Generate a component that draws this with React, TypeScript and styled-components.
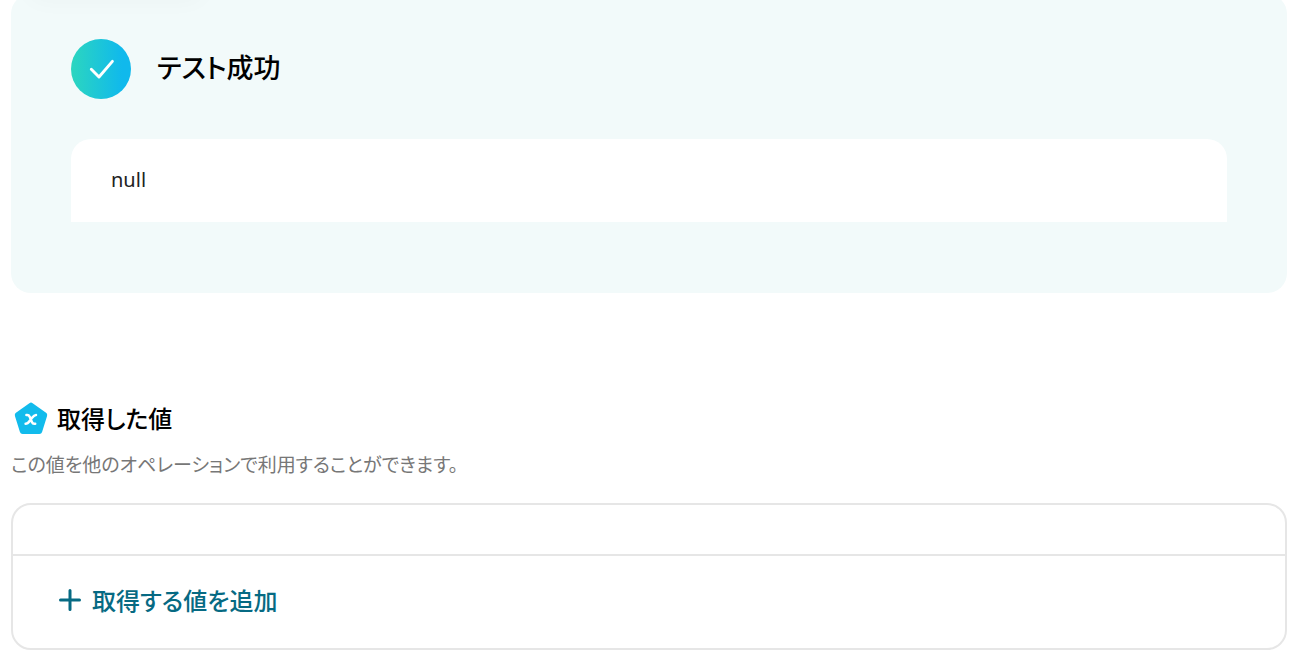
import React from "react";
import styled, { createGlobalStyle } from "styled-components";

const GlobalStyle = createGlobalStyle`
  * { box-sizing: border-box; }
  body {
    margin: 0;
    background: #fff;
    color: #000;
    font-family: "Noto Sans", "Noto Sans CJK JP", sans-serif;
    font-feature-settings: "palt";
    overflow-x: hidden;
  }
  h2, h3, p, output { margin: 0; }
`;

const Page = styled.main`
  position: relative;
  display: flow-root;
  padding: 0 29px 8px 11px;
  overflow: hidden;
`;

const FloatingShadow = styled.div`
  position: absolute;
  top: -40px;
  left: 28px;
  width: 176px;
  height: 32px;
  border-radius: 16px;
  box-shadow: 0 8px 24px rgba(0, 0, 0, 0.03);
`;

const ResultPanel = styled.section`
  margin-top: -6px;
  padding: 45px 60px 71px;
  border-radius: 20px;
  background: #f2fafa;
`;

const ResultHeader = styled.header`
  display: flex;
  align-items: center;
  gap: 26px;
  margin-bottom: 40px;
`;

const ResultTitle = styled.h2`
  padding-bottom: 4px;
  font-family: "Noto Sans CJK JP", sans-serif;
  font-size: 27px;
  line-height: 40px;
  font-weight: 500;
`;

const ResultBody = styled.output`
  display: block;
  padding: 23px 40px 25px;
  border-radius: 20px 20px 0 0;
  background: #fff;
  color: #222;
  font-size: 20px;
  line-height: 35px;
`;

const ValuesSection = styled.section`
  margin-top: 106px;
`;

const ValuesHeader = styled.header`
  display: flex;
  align-items: center;
  gap: 6px;
`;

const ValuesTitle = styled.h3`
  padding-bottom: 2px;
  font-family: "Noto Sans CJK JP", sans-serif;
  font-size: 24px;
  line-height: 38px;
  font-weight: 500;
`;

const Description = styled.p`
  margin: 11px 0 25px;
  color: #777;
  font-family: "Noto Sans CJK JP", sans-serif;
  font-size: 19px;
  line-height: 28px;
`;

const ValuesCard = styled.div`
  border: 2px solid #e6e6e6;
  border-radius: 20px;
`;

const ValuesList = styled.div`
  height: 51px;
  border-bottom: 2px solid #e6e6e6;
`;

const AddRow = styled.div`
  padding: 24px 44px 28px;
`;

const AddButton = styled.button`
  display: flex;
  align-items: center;
  gap: 9px;
  padding: 0;
  border: 0;
  background: none;
  color: #066a83;
  font-family: "Noto Sans CJK JP", sans-serif;
  font-feature-settings: inherit;
  font-size: 24px;
  line-height: 40px;
  font-weight: 500;
  cursor: pointer;
`;

const Icon = styled.svg`
  display: block;
  flex: none;
`;

function SuccessIcon() {
  return (
    <Icon width="60" height="60" viewBox="0 0 60 60" aria-hidden="true">
      <defs>
        <linearGradient id="success" x1="0" y1="0" x2="1" y2="0">
          <stop offset="0" stopColor="#2cd6bf" />
          <stop offset="0.85" stopColor="#10b9ec" />
          <stop offset="1" stopColor="#10b9ec" />
        </linearGradient>
      </defs>
      <circle cx="30" cy="30" r="30" fill="url(#success)" />
      <path
        d="M20.3 30.2L28 38L41.4 22.4"
        fill="none"
        stroke="#fff"
        strokeWidth="2.9"
        strokeLinecap="round"
        strokeLinejoin="round"
      />
    </Icon>
  );
}

function ValueIcon() {
  return (
    <Icon width="40" height="40" viewBox="0 0 40 40" aria-hidden="true">
      <path
        d="M20 6.4L33.4 16.1L28.4 32.2H11.6L6.6 16.1Z"
        fill="#12bbec"
        stroke="#12bbec"
        strokeWidth="5.6"
        strokeLinejoin="round"
      />
      <path
        d="M15.4 16H16.2C17.6 16 18.2 16.6 18.7 17.7L20.9 23C21.4 24.2 22 24.8 23.2 24.8H24.2M25 16C22.6 16 21.6 18.2 19.8 20.4C18 22.8 17 24.8 14.6 24.8"
        fill="none"
        stroke="#fff"
        strokeWidth="2.5"
        strokeLinecap="round"
      />
    </Icon>
  );
}

function PlusIcon() {
  return (
    <Icon width="26" height="26" viewBox="0 0 26 26" aria-hidden="true">
      <path d="M13 3.5V22.5M3.5 13H22.5" stroke="currentColor" strokeWidth="3" strokeLinecap="round" />
    </Icon>
  );
}

export default function App() {
  return (
    <>
      <GlobalStyle />
      <Page>
        <ResultPanel>
          <ResultHeader>
            <SuccessIcon />
            <ResultTitle>テスト成功</ResultTitle>
          </ResultHeader>
          <ResultBody>null</ResultBody>
        </ResultPanel>
        <FloatingShadow />
        <ValuesSection>
          <ValuesHeader>
            <ValueIcon />
            <ValuesTitle>取得した値</ValuesTitle>
          </ValuesHeader>
          <Description>この値を他のオペレーションで利用することができます。</Description>
          <ValuesCard>
            <ValuesList />
            <AddRow>
              <AddButton type="button">
                <PlusIcon />
                取得する値を追加
              </AddButton>
            </AddRow>
          </ValuesCard>
        </ValuesSection>
      </Page>
    </>
  );
}
